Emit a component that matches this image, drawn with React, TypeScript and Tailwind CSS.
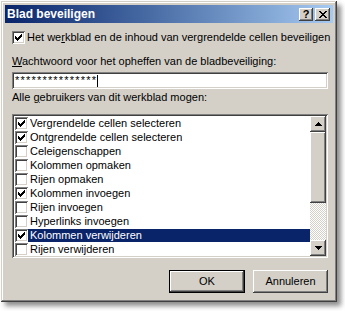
import React from "react";

const raised =
  "shadow-[inset_-1px_-1px_#404040,inset_1px_1px_#ffffff,inset_-2px_-2px_#808080,inset_2px_2px_#d4d0c8]";
const sunken =
  "shadow-[inset_1px_1px_#808080,inset_-1px_-1px_#ffffff,inset_2px_2px_#404040,inset_-2px_-2px_#d4d0c8]";

const items = [
  { label: "Vergrendelde cellen selecteren", checked: true },
  { label: "Ontgrendelde cellen selecteren", checked: true },
  { label: "Celeigenschappen", checked: false },
  { label: "Kolommen opmaken", checked: false },
  { label: "Rijen opmaken", checked: false },
  { label: "Kolommen invoegen", checked: true },
  { label: "Rijen invoegen", checked: false },
  { label: "Hyperlinks invoegen", checked: false },
  { label: "Kolommen verwijderen", checked: true, selected: true },
  { label: "Rijen verwijderen", checked: false },
];

const CheckMark = () => (
  <svg width="7" height="7" viewBox="0 0 7 7" shapeRendering="crispEdges" className="block">
    <rect x="0" y="2" width="1" height="3" fill="#000" />
    <rect x="1" y="3" width="1" height="3" fill="#000" />
    <rect x="2" y="4" width="1" height="3" fill="#000" />
    <rect x="3" y="3" width="1" height="3" fill="#000" />
    <rect x="4" y="2" width="1" height="3" fill="#000" />
    <rect x="5" y="1" width="1" height="3" fill="#000" />
    <rect x="6" y="0" width="1" height="3" fill="#000" />
  </svg>
);

const CheckBox = ({ checked }: { checked: boolean }) => (
  <div className={`w-[13px] h-[13px] shrink-0 bg-white flex items-center justify-center ${sunken}`}>
    {checked && <CheckMark />}
  </div>
);

const Arrow = ({ up }: { up?: boolean }) => (
  <svg width="7" height="4" viewBox="0 0 7 4" shapeRendering="crispEdges" className="block">
    {up ? (
      <path d="M3 0h1v1h1v1h1v1h1v1H0V3h1V2h1V1h1z" fill="#000" />
    ) : (
      <path d="M0 0h7v1H6v1H5v1H4v1H3V3H2V2H1V1H0z" fill="#000" />
    )}
  </svg>
);

export default function App() {
  return (
    <div
      className="w-[345px] h-[311px] bg-white pl-[1px] pt-[1px] overflow-hidden"
      style={{ fontFamily: '"Liberation Sans", Arial, sans-serif' }}
    >
      <div className="w-[336px] h-[301px] bg-[#d4d0c8] p-[4px] flex flex-col text-[11px] leading-[13px] text-black whitespace-nowrap shadow-[inset_-1px_-1px_#404040,inset_1px_1px_#d4d0c8,inset_-2px_-2px_#808080,inset_2px_2px_#ffffff,4px_4px_5px_rgba(0,0,0,0.45)]">
        {/* title bar */}
        <div className="h-[18px] shrink-0 flex items-center justify-between pl-[2px] pr-[3px] bg-linear-to-r from-[#0a246a] to-[#a6caf0]">
          <span className="text-white font-bold text-[12px]">Blad beveiligen</span>
          <div className="flex gap-[2px]">
            <div className={`w-[14px] h-[13px] bg-[#d4d0c8] flex items-center justify-center ${raised}`}>
              <span className="font-bold text-[11px] leading-[11px]">?</span>
            </div>
            <div className={`w-[15px] h-[13px] bg-[#d4d0c8] flex items-center justify-center ${raised}`}>
              <svg width="8" height="7" viewBox="0 0 8 7" shapeRendering="crispEdges" className="block">
                <path
                  d="M0 0h2v1h1v1h2V1h1V0h2v1H7v1H6v1H5v1h1v1h1v1h1v1H6V6H5V5H3v1H2v1H0V6h1V5h1V4h1V3H2V2H1V1H0z"
                  fill="#000"
                />
              </svg>
            </div>
          </div>
        </div>

        <div className="flex flex-col pl-[7px] pr-[5px]">
          <div className="mt-[8px] flex items-center h-[13px]">
            <CheckBox checked />
            <span className="ml-[2px]">
              Het we<span className="underline">r</span>kblad en de inhoud van vergrendelde cellen beveiligen
            </span>
          </div>

          <div className="mt-[11px]">
            <span className="underline">W</span>achtwoord voor het opheffen van de bladbeveiliging:
          </div>

          <div className={`mt-[4px] h-[17px] bg-white flex items-center pl-[3px] ${sunken}`}>
            <span className="text-[11px] tracking-[1.2px]">***************</span>
            <div className="w-[1px] h-[12px] bg-black" />
          </div>

          <div className="mt-[2px]">
            Alle <span className="underline">g</span>ebruikers van dit werkblad mogen:
          </div>

          <div className={`mt-[10px] h-[144px] bg-white p-[2px] flex ${sunken}`}>
            <div className="flex-1 flex flex-col">
              {items.map((item) => (
                <div key={item.label} className="h-[14px] flex items-center">
                  <div className="pl-[1px]">
                    <CheckBox checked={item.checked} />
                  </div>
                  <div
                    className={`flex-1 h-[13px] flex items-center pl-[2px] ${
                      item.selected ? "bg-[#0a246a] text-white" : ""
                    }`}
                  >
                    {item.label}
                  </div>
                </div>
              ))}
            </div>
            <div className="w-[16px] flex flex-col">
              <div className={`h-[16px] bg-[#d4d0c8] flex items-center justify-center ${raised}`}>
                <Arrow up />
              </div>
              <div className={`h-[71px] bg-[#d4d0c8] ${raised}`} />
              <div className="flex-1 bg-[repeating-conic-gradient(#d4d0c8_0_25%,#ffffff_0_50%)] bg-[length:2px_2px]" />
              <div className={`h-[16px] bg-[#d4d0c8] flex items-center justify-center ${raised}`}>
                <Arrow />
              </div>
            </div>
          </div>

          <div className="mt-[12px] flex justify-end gap-[8px]">
            <div className="w-[76px] h-[23px] border border-black">
              <div className={`w-full h-full bg-[#d4d0c8] flex items-center justify-center ${raised}`}>
                OK
              </div>
            </div>
            <div className={`w-[75px] h-[23px] bg-[#d4d0c8] flex items-center justify-center ${raised}`}>
              Annuleren
            </div>
          </div>
        </div>
      </div>
    </div>
  );
}
